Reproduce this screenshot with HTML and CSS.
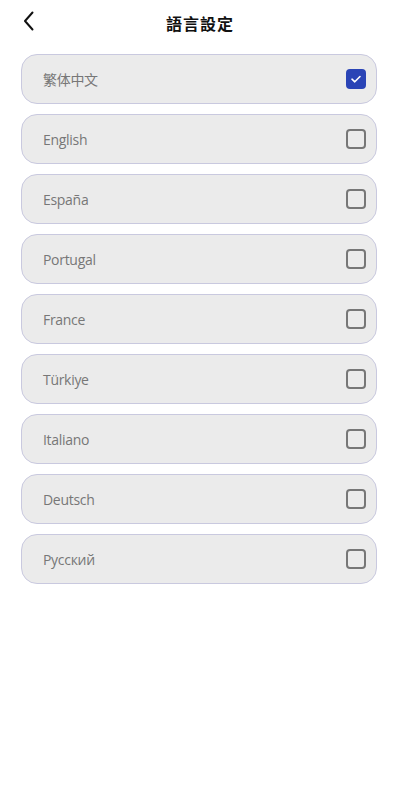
FILE: index.html
```html
<!DOCTYPE html>
<html lang="zh-Hant">
<head>
<meta charset="utf-8">
<link rel="stylesheet" href="styles.css">
</head>
<body>
<header class="topbar">
  <span class="back"><svg width="12" height="20" viewBox="0 0 12 20"><path d="M9.5 1.5 L2 10 L9.5 18.5" fill="none" stroke="#111" stroke-width="2" stroke-linecap="round" stroke-linejoin="round"/></svg></span>
  <h1 class="title">語言設定</h1>
</header>
<ul class="list">
  <li class="item"><span class="label">繁体中文</span><span class="box checked"><svg width="12" height="10" viewBox="0 0 12 10"><path d="M2 5.2 L4.8 7.8 L10 2.5" fill="none" stroke="#fff" stroke-width="1.6" stroke-linecap="round" stroke-linejoin="round"/></svg></span></li>
  <li class="item"><span class="label">English</span><span class="box"></span></li>
  <li class="item"><span class="label">España</span><span class="box"></span></li>
  <li class="item"><span class="label">Portugal</span><span class="box"></span></li>
  <li class="item"><span class="label">France</span><span class="box"></span></li>
  <li class="item"><span class="label">Türkiye</span><span class="box"></span></li>
  <li class="item"><span class="label">Italiano</span><span class="box"></span></li>
  <li class="item"><span class="label">Deutsch</span><span class="box"></span></li>
  <li class="item"><span class="label">Русский</span><span class="box"></span></li>
</ul>
</body>
</html>
```
FILE: styles.css
```css
* { box-sizing: border-box; }
html, body { margin: 0; padding: 0; background: #fff; }
body { font-family: Lato, "Noto Sans CJK TC", sans-serif; width: 400px; }
.topbar {
  position: relative;
  height: 46px;
  display: flex;
  align-items: center;
  justify-content: center;
}
.back { position: absolute; left: 23px; top: 11px; display: block; width: 12px; height: 20px; }
.back svg { display: block; }
.title {
  margin: 0;
  font-family: "Noto Sans CJK TC", sans-serif;
  font-size: 16px;
  font-weight: 700;
  color: #111;
  line-height: 1;
  letter-spacing: 1px;
  margin-top: -1px;
}
.list {
  list-style: none;
  margin: 8px 0 0 0;
  padding: 0 23px 0 21px;
  display: flex;
  flex-direction: column;
  gap: 10px;
}
.item {
  height: 50px;
  border: 1px solid #c9c9df;
  border-radius: 16px;
  background: #ebebeb;
  display: flex;
  align-items: center;
  justify-content: space-between;
  padding: 0 10px 0 21px;
}
.label {
  font-family: "Open Sans", "Noto Sans CJK TC", sans-serif;
  font-size: 14px;
  color: #777;
  letter-spacing: -0.3px;
}
.box {
  width: 20px;
  height: 20px;
  border: 2px solid #777;
  border-radius: 4px;
  display: flex;
  align-items: center;
  justify-content: center;
}
.box.checked { background: #2a44b6; border-color: #2a44b6; }
.box svg { display: block; }
```
